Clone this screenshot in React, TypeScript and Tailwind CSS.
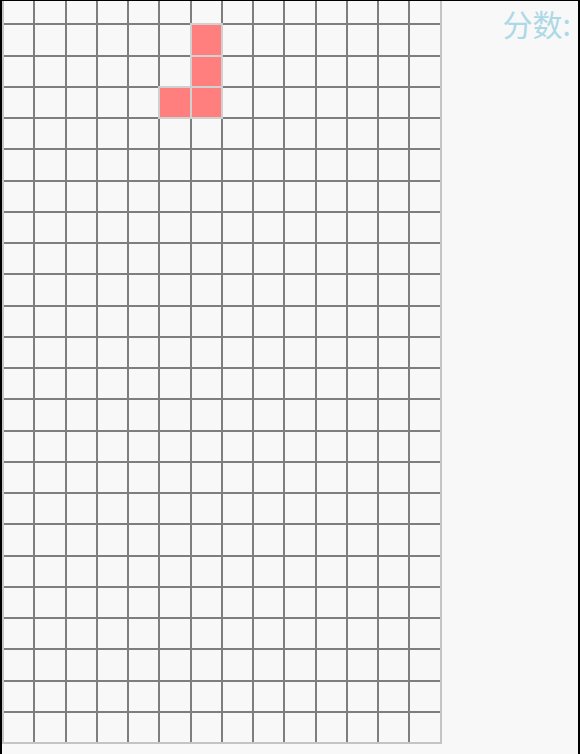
import React from 'react';

const COLS = 14;
const ROWS = 24;

// current falling piece (J shape)
const piece: Array<[number, number]> = [
  [6, 1],
  [6, 2],
  [5, 3],
  [6, 3],
];

const isPiece = (x: number, y: number) => piece.some(([px, py]) => px === x && py === y);

const Board: React.FC = () => {
  const cells = [];
  for (let y = 0; y < ROWS; y++) {
    for (let x = 0; x < COLS; x++) {
      const filled = isPiece(x, y);
      cells.push(
        <div
          key={`${x}-${y}`}
          className={
            filled
              ? 'relative z-10 bg-[#ff7f7f] outline-2 outline-[#d0d0d0]'
              : 'bg-[#f8f8f8]'
          }
        />
      );
    }
  }
  return (
    <div className="-mt-[9px] grid h-[752px] w-[439.5px] shrink-0 grid-cols-[repeat(14,29.25px)] grid-rows-[repeat(24,29.25px)] gap-[2px] border-2 border-[#c4c4c4] bg-[#7e7e7e]">
      {cells}
    </div>
  );
};

export default function App() {
  return (
    <div className="flex h-[754px] w-[580px] overflow-y-hidden border-l-2 border-r-2 border-t border-black bg-[#f8f8f8]">
      <Board />
      <div className="min-w-0 flex-1 pl-[61px]">
        <div
          className="whitespace-nowrap text-[30px] leading-normal text-[#add8e6]"
          style={{ fontFamily: '"Noto Sans CJK SC", "Noto Sans", sans-serif' }}
        >
          分数:
        </div>
      </div>
    </div>
  );
}
